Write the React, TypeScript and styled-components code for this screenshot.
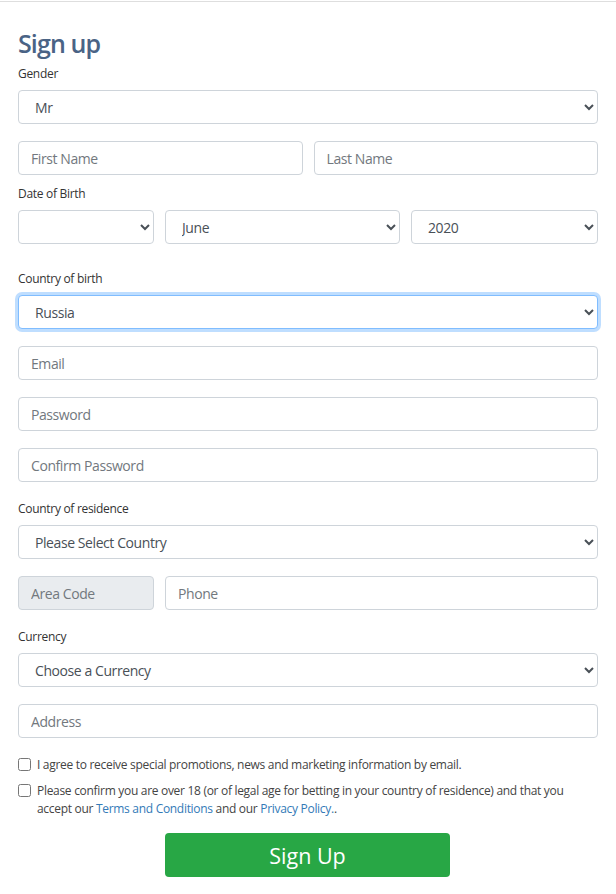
import styled, { createGlobalStyle } from "styled-components";

const GlobalStyle = createGlobalStyle`
  body {
    margin: 0;
    background: #fff;
    font-family: "Open Sans", "Noto Sans", sans-serif;
    color: #333;
  }
`;

const Page = styled.div`
  margin-top: 1px;
  border-top: 1px solid #dedede;
  padding: 0 18px;
`;

const Title = styled.h2`
  margin: 26px 0 6px;
  font-size: 25px;
  line-height: 30px;
  font-weight: 600;
  letter-spacing: -0.035em;
  color: #4a6385;
`;

const Group = styled.div<{ $gap?: number }>`
  margin-bottom: ${(p) => p.$gap ?? 17}px;
`;

const Label = styled.label`
  display: block;
  padding-top: 1px;
  margin-bottom: 7px;
  font-size: 12px;
  line-height: 18px;
  letter-spacing: -0.025em;
  color: #333;
`;

const fieldBase = `
  box-sizing: border-box;
  width: 100%;
  height: 34px;
  padding: 0 12px;
  font-family: "Open Sans", "Noto Sans", sans-serif;
  font-size: 14px;
  letter-spacing: -0.03em;
  color: #495057;
  background: #fff;
  border: 1px solid #ced4da;
  border-radius: 4px;
  outline: none;
`;

const Input = styled.input<{ $muted?: boolean }>`
  ${fieldBase}
  background: ${(p) => (p.$muted ? "#e9ecef" : "#fff")};
  &::placeholder {
    color: #72787e;
  }
`;

const Select = styled.select<{ $focused?: boolean }>`
  ${fieldBase}
  border-color: ${(p) => (p.$focused ? "#80bdff" : "#ced4da")};
  box-shadow: ${(p) =>
    p.$focused ? "0 0 0 3px rgba(0, 123, 255, 0.25)" : "none"};
`;

const Row = styled.div<{ $cols: string }>`
  display: grid;
  grid-template-columns: ${(p) => p.$cols};
  gap: 11px;
`;

const Checks = styled.div`
  display: flex;
  flex-direction: column;
  gap: 8px;
  padding-top: 1px;
  margin-bottom: 15px;
`;

const CheckItem = styled.label`
  display: flex;
  align-items: flex-start;
  gap: 6px;
  font-size: 12px;
  line-height: 18px;
  letter-spacing: -0.025em;
  color: #444;
`;

const Box = styled.input`
  flex: none;
  width: 13px;
  height: 13px;
  margin: 2px 0 0 0;
`;

const Link = styled.a`
  color: #337ab7;
  text-decoration: none;
`;

const SubmitButton = styled.button`
  grid-column: 2;
  height: 44px;
  border: none;
  border-radius: 4px;
  background: #28a745;
  color: #fff;
  font-family: "Open Sans", "Noto Sans", sans-serif;
  font-size: 21.5px;
  cursor: pointer;
`;

const months = [
  "January", "February", "March", "April", "May", "June",
  "July", "August", "September", "October", "November", "December",
];

export default function App() {
  return (
    <>
      <GlobalStyle />
      <Page>
        <Title>Sign up</Title>

        <Group>
          <Label>Gender</Label>
          <Select defaultValue="Mr">
            <option>Mr</option>
            <option>Mrs</option>
            <option>Ms</option>
          </Select>
        </Group>

        <Group $gap={9}>
          <Row $cols="1fr 1fr">
            <Input placeholder="First Name" />
            <Input placeholder="Last Name" />
          </Row>
        </Group>

        <Group $gap={25}>
          <Label>Date of Birth</Label>
          <Row $cols="136px 235px 1fr">
            <Select defaultValue="">
              <option value=""></option>
              {Array.from({ length: 31 }, (_, i) => (
                <option key={i}>{i + 1}</option>
              ))}
            </Select>
            <Select defaultValue="June">
              {months.map((m) => (
                <option key={m}>{m}</option>
              ))}
            </Select>
            <Select defaultValue="2020">
              <option>2020</option>
              <option>2019</option>
            </Select>
          </Row>
        </Group>

        <Group>
          <Label>Country of birth</Label>
          <Select $focused defaultValue="Russia">
            <option>Russia</option>
          </Select>
        </Group>

        <Group>
          <Input type="email" placeholder="Email" />
        </Group>
        <Group>
          <Input type="password" placeholder="Password" />
        </Group>
        <Group>
          <Input type="password" placeholder="Confirm Password" />
        </Group>

        <Group>
          <Label>Country of residence</Label>
          <Select defaultValue="">
            <option value="">Please Select Country</option>
          </Select>
        </Group>

        <Group>
          <Row $cols="136px 1fr">
            <Input $muted readOnly placeholder="Area Code" />
            <Input placeholder="Phone" />
          </Row>
        </Group>

        <Group>
          <Label>Currency</Label>
          <Select defaultValue="">
            <option value="">Choose a Currency</option>
          </Select>
        </Group>

        <Group>
          <Input placeholder="Address" />
        </Group>

        <Checks>
          <CheckItem>
            <Box type="checkbox" />
            <span>
              I agree to receive special promotions, news and marketing
              information by email.
            </span>
          </CheckItem>
          <CheckItem>
            <Box type="checkbox" />
            <span>
              Please confirm you are over 18 (or of legal age for betting in
              your country of residence) and that you accept our{" "}
              <Link href="#">Terms and Conditions</Link> and our{" "}
              <Link href="#">Privacy Policy.</Link>.
            </span>
          </CheckItem>
        </Checks>

        <Row $cols="136px 285px">
          <SubmitButton type="button">Sign Up</SubmitButton>
        </Row>
      </Page>
    </>
  );
}
